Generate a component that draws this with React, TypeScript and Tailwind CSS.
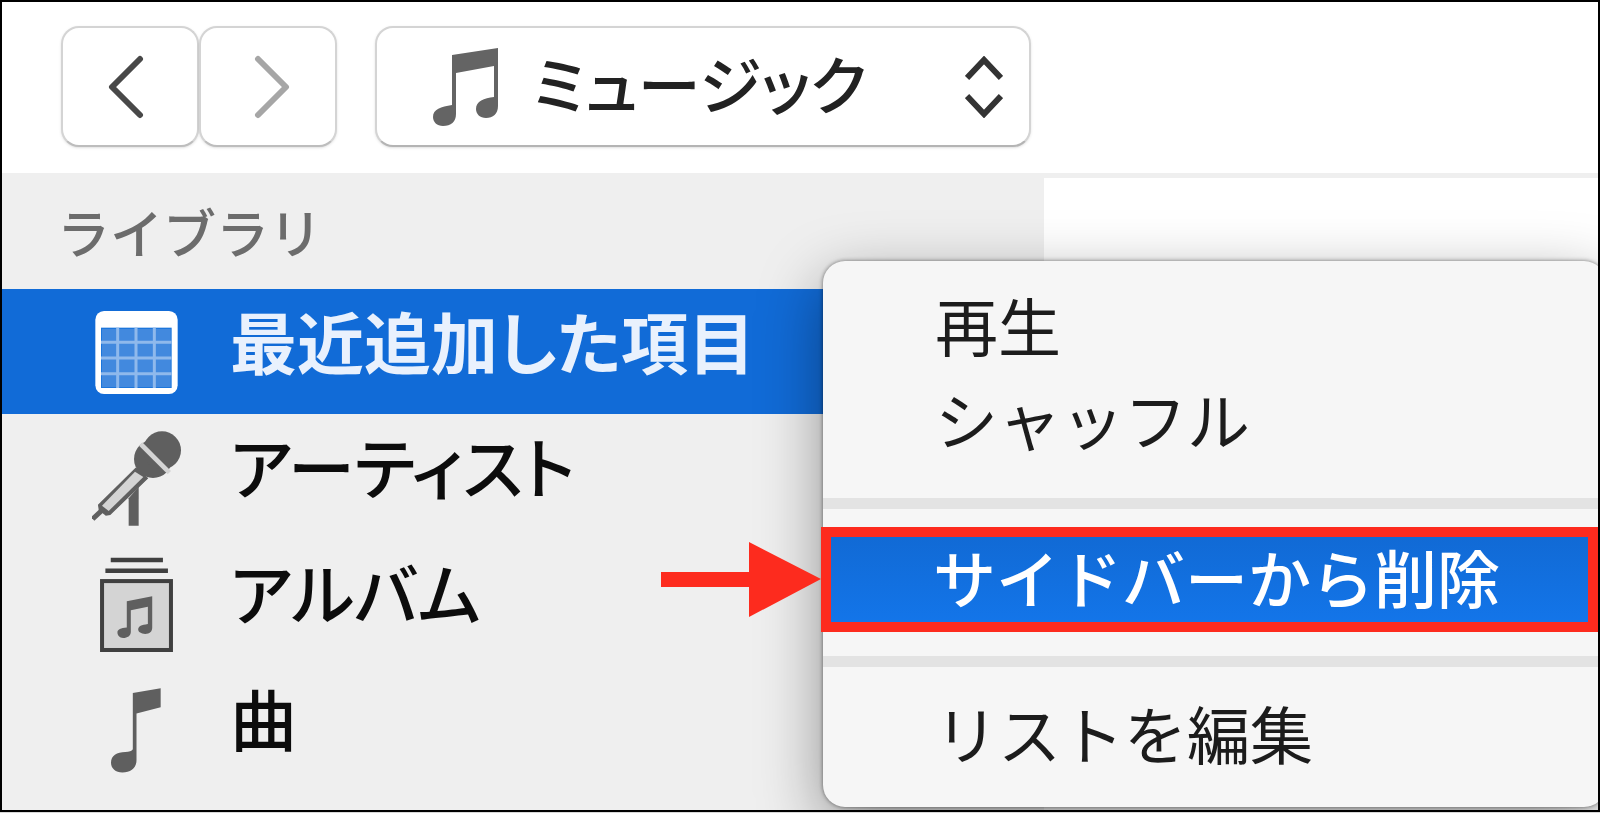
import type { ReactNode } from "react";

interface LibraryItem {
  label: string;
  icon: ReactNode;
  selected?: boolean;
}

function ChevronIcon({ className }: { className: string }) {
  return (
    <svg viewBox="0 0 36 64" className={className} fill="none" stroke="currentColor" strokeWidth="6" strokeLinecap="round" strokeLinejoin="round">
      <path d="M32 4 L4 32 L32 60" />
    </svg>
  );
}

function UpDownIcon({ className }: { className: string }) {
  return (
    <svg viewBox="0 0 38 62" className={className} fill="none" stroke="currentColor" strokeWidth="6">
      <path d="M2 22 L19 4 L36 22" />
      <path d="M2 40 L19 58 L36 40" />
    </svg>
  );
}

function MusicIcon({ className }: { className: string }) {
  return (
    <svg viewBox="0 0 65 78" className={className} fill="currentColor">
      <path d="M0 69C0 61 8 59 19 57V7L65 0V58C65 66 60 70 53 70C47 70 43 66 43 61C43 53 51 50 61 49V18L23 25V66C23 74 18 78 10 78C4 78 0 74 0 69Z" />
    </svg>
  );
}

function CalendarIcon() {
  return (
    <svg viewBox="0 0 247 249" className="h-[83px] w-[83px]">
      <rect width="247" height="249" rx="26" fill="#ffffff" />
      <rect x="17" y="50" width="212" height="181" fill="#1c76dc" />
      <rect x="20" y="54" width="206" height="174" fill="#4289de" />
      <path d="M67 50V231M122 50V231M177 50V231M17 94H229M17 141H229M17 188H229" stroke="#8fb9ec" strokeWidth="9" />
    </svg>
  );
}

function MicrophoneIcon() {
  return (
    <svg viewBox="0 0 267 285" className="h-[95px] w-[89px]">
      <path d="M110 202L140 167V284H110Z" fill="#5f5f5f" />
      <path d="M2 264L32 236" stroke="#5f5f5f" strokeWidth="15" />
      <path d="M132 112L20 222L22 236L42 252L54 250L166 142Z" fill="#5f5f5f" stroke="#5f5f5f" strokeWidth="4" />
      <path d="M129 122L30 224L50 240L154 138Z" fill="#d4d4d4" />
      <circle cx="183" cy="84" r="57" fill="#5f5f5f" />
      <circle cx="210" cy="58" r="57" fill="#5f5f5f" />
      <path d="M146 39L232 125" stroke="#d4d4d4" strokeWidth="14" />
    </svg>
  );
}

function AlbumIcon() {
  return (
    <svg viewBox="0 0 218 284" className="h-[95px] w-[73px]">
      <path d="M32 9H188M16 41H203" stroke="#404040" strokeWidth="13" />
      <rect x="6" y="72" width="206" height="206" fill="#d4d4d4" stroke="#404040" strokeWidth="12" />
      <path
        d="M52 226C52 216 62 213 80 211V132L156 117V211C156 224 148 230 135 230C123 230 114 224 114 217C114 206 124 203 143 200V149L92 159V224C92 235 82 242 69 242C59 242 52 235 52 226Z"
        fill="#5f5f5f"
      />
    </svg>
  );
}

function SongIcon() {
  return (
    <svg viewBox="0 0 149 252" className="h-[85px] w-[50px]">
      <path d="M0 222C0 200 17 191 43 190C54 190 62 187 65 182V14L148 0V57L76 75V215C76 238 58 251 34 251C14 251 0 239 0 222Z" fill="#5f5f5f" />
    </svg>
  );
}

const libraryItems: LibraryItem[] = [
  { label: "最近追加した項目", icon: <CalendarIcon />, selected: true },
  { label: "アーティスト", icon: <MicrophoneIcon /> },
  { label: "アルバム", icon: <AlbumIcon /> },
  { label: "曲", icon: <SongIcon /> },
];

function Toolbar() {
  return (
    <header className="flex h-[171px] items-start bg-white pt-6 pl-[59px]">
      <button
        aria-label="戻る"
        className="grid h-[121px] w-[138px] place-items-center rounded-[18px] border-2 border-[#d4d4d4] border-b-[#bdbdbd] bg-white pr-2 text-[#484848] shadow-sm"
      >
        <ChevronIcon className="h-16 w-9" />
      </button>
      <button
        aria-label="進む"
        className="grid h-[121px] w-[138px] place-items-center rounded-[18px] border-2 border-[#d4d4d4] border-b-[#bdbdbd] bg-white pl-2 text-[#a6a6a6] shadow-sm"
      >
        <ChevronIcon className="h-16 w-9 rotate-180" />
      </button>
      <div className="relative ml-[38px] w-[656px]">
        <MusicIcon className="pointer-events-none absolute top-[22px] left-[58px] h-[78px] w-[65px] text-[#646464]" />
        <select
          aria-label="メディアの種類"
          className="h-[121px] w-full appearance-none rounded-[18px] border-2 border-[#d4d4d4] border-b-[#b4b4b4] bg-white pb-2 pl-[156px] text-[63px] font-medium text-[#222222] shadow-sm [font-feature-settings:'palt']"
        >
          <option>ミュージック</option>
        </select>
        <UpDownIcon className="pointer-events-none absolute top-[30px] right-7 h-[62px] w-[38px] text-[#333333]" />
      </div>
    </header>
  );
}

function Sidebar() {
  return (
    <nav className="w-[1042px] bg-[#efefef]">
      <h2 className="flex h-[116px] items-center pl-[55px] text-[53px] leading-[72px] font-medium text-[#6c6c6c]">ライブラリ</h2>
      <ul>
        {libraryItems.map((item) => (
          <li key={item.label}>
            <a
              href="#"
              className={
                item.selected
                  ? "flex h-[125px] items-center bg-[#116bd7] font-bold text-[#e9f1fd]"
                  : "flex h-[126px] items-center font-medium text-[#0c0c0c]"
              }
            >
              <span className="ml-[84px] grid w-[100px] place-items-center pt-0.5">{item.icon}</span>
              <span className="ml-[44px] pb-6 text-[67px] leading-[84px] whitespace-nowrap [font-feature-settings:'palt']">{item.label}</span>
            </a>
          </li>
        ))}
      </ul>
    </nav>
  );
}

function ContextMenu() {
  return (
    <div
      role="menu"
      className="absolute top-[88px] -right-2 left-[821px] rounded-[22px] bg-[#f6f6f6] pt-4 pb-7 text-[63px] leading-[94px] text-[#1c1c1c] shadow-[0_20px_64px_rgba(0,0,0,0.4),0_0_4px_rgba(0,0,0,0.5)]"
    >
      <button role="menuitem" className="block w-full pl-28 text-left">
        再生
      </button>
      <button role="menuitem" className="block w-full pl-28 text-left">
        シャッフル
      </button>
      <hr className="mt-[33px] mb-[18px] h-[11px] border-0 bg-[#e3e3e3]" />
      <div className="relative -ml-0.5 pr-2">
        <button
          role="menuitem"
          className="block h-[105px] w-full border-10 border-[#fd2b1e] bg-linear-to-b from-[#116ad5] to-[#1375e9] pb-2 pl-[102px] text-left leading-[76px] font-medium text-white"
        >
          サイドバーから削除
        </button>
        <svg viewBox="0 0 161 75" className="absolute top-[15px] right-full h-[75px] w-[161px]" fill="#fd2b1e">
          <path d="M1 30H89V0L161 37L89 75V45H1Z" />
        </svg>
      </div>
      <hr className="mt-6 mb-[18px] h-[11px] border-0 bg-[#e3e3e3]" />
      <button role="menuitem" className="block w-full pl-28 text-left">
        リストを編集
      </button>
    </div>
  );
}

export default function App() {
  return (
    <div className="flex min-h-screen bg-[#d8d8d8] pb-px font-['Noto_Sans_CJK_JP',sans-serif]">
      <div className="flex flex-1 flex-col overflow-hidden border-2 border-black">
        <Toolbar />
        <main className="relative flex flex-1">
          <Sidebar />
          <section className="flex-1 border-t-5 border-[#efefef] bg-white" />
          <ContextMenu />
        </main>
      </div>
    </div>
  );
}
